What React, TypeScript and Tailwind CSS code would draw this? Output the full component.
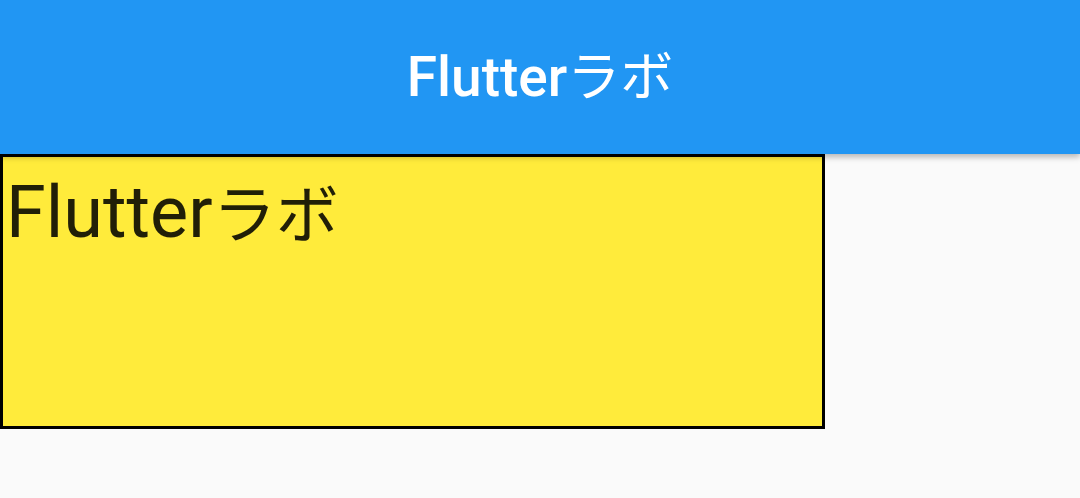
import React from "react";

export default function App() {
  const font = { fontFamily: '"Roboto", "Noto Sans CJK JP", sans-serif' };
  return (
    <div className="w-[1080px] h-[498px] bg-[#fafafa] overflow-hidden flex flex-col" style={font}>
      <div className="relative z-10 h-[154px] bg-[#2196f3] flex items-center justify-center shadow-[0_3px_6px_rgba(0,0,0,0.28)]">
        <span className="text-white text-[55px] leading-none font-medium">
          Flutter<span className="text-[53px] font-normal">ラボ</span>
        </span>
      </div>
      <div className="w-[825px] h-[275px] border-[3px] border-black bg-[#ffeb3b] pt-[20px] pl-[3px]">
        <div className="text-[72px] leading-none text-[rgba(0,0,0,0.87)] whitespace-nowrap">
          Flutter<span className="text-[63px]">ラボ</span>
        </div>
      </div>
    </div>
  );
}
